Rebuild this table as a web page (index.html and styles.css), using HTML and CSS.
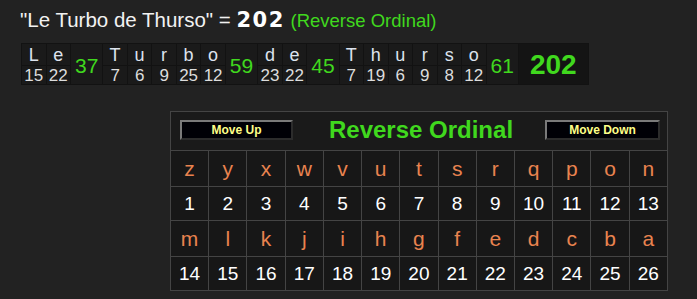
FILE: index.html
```html
<!DOCTYPE html>
<html lang="en">
<head>
    <meta charset="UTF-8">
    <meta name="viewport" content="width=device-width, initial-scale=1.0">
    <title>Le Turbo de Thurso - Reverse Ordinal</title>
    <link rel="stylesheet" href="styles.css">
</head>
<body>
    <div class="page">
        <div class="phrase">"Le Turbo de Thurso" = <b class="phrase-total">202</b> <span class="cipher-tag">(Reverse Ordinal)</span></div>

        <table class="breakdown">
            <tr>
                <td class="ch">L</td><td class="ch">e</td>
                <td class="word-sum" rowspan="2">37</td>
                <td class="ch">T</td><td class="ch">u</td><td class="ch">r</td><td class="ch">b</td><td class="ch">o</td>
                <td class="word-sum" rowspan="2">59</td>
                <td class="ch">d</td><td class="ch">e</td>
                <td class="word-sum" rowspan="2">45</td>
                <td class="ch">T</td><td class="ch">h</td><td class="ch">u</td><td class="ch">r</td><td class="ch">s</td><td class="ch">o</td>
                <td class="word-sum" rowspan="2">61</td>
                <td class="grand" rowspan="2">202</td>
            </tr>
            <tr class="vals">
                <td>15</td><td>22</td>
                <td>7</td><td>6</td><td>9</td><td>25</td><td>12</td>
                <td>23</td><td>22</td>
                <td>7</td><td>19</td><td>6</td><td>9</td><td>8</td><td>12</td>
            </tr>
        </table>

        <table class="cipher">
            <tr>
                <td class="cipher-head" colspan="13">
                    <div class="head-bar">
                        <button class="move-btn move-up">Move Up</button>
                        <h2 class="cipher-name">Reverse Ordinal</h2>
                        <button class="move-btn move-down">Move Down</button>
                    </div>
                </td>
            </tr>
            <tr class="letters">
                <td>z</td><td>y</td><td>x</td><td>w</td><td>v</td><td>u</td><td>t</td><td>s</td><td>r</td><td>q</td><td>p</td><td>o</td><td>n</td>
            </tr>
            <tr class="numbers">
                <td>1</td><td>2</td><td>3</td><td>4</td><td>5</td><td>6</td><td>7</td><td>8</td><td>9</td><td>10</td><td>11</td><td>12</td><td>13</td>
            </tr>
            <tr class="letters">
                <td>m</td><td>l</td><td>k</td><td>j</td><td>i</td><td>h</td><td>g</td><td>f</td><td>e</td><td>d</td><td>c</td><td>b</td><td>a</td>
            </tr>
            <tr class="numbers">
                <td>14</td><td>15</td><td>16</td><td>17</td><td>18</td><td>19</td><td>20</td><td>21</td><td>22</td><td>23</td><td>24</td><td>25</td><td>26</td>
            </tr>
        </table>
    </div>
</body>
</html>
```

FILE: styles.css
```css
:root {
    --page-bg: #222222;
    --cell-bg: #1a1a1a;
    --grid-bg: #171717;
    --grid-line: #444444;
    --green: #40d81e;
    --orange: #e9834f;
    --text: #e4e4e4;
}

* {
    margin: 0;
    padding: 0;
    box-sizing: border-box;
    font-family: "Liberation Sans", Arial, sans-serif;
}

body {
    background-color: var(--page-bg);
    color: var(--text);
}

.page {
    padding: 8px 0 0 20px;
}

/* Phrase line */
.phrase {
    font-size: 20.5px;
    line-height: 24px;
    color: #f2f2f2;
}

.phrase-total {
    font-family: "DejaVu Sans", sans-serif;
    font-size: 21px;
    font-weight: 700;
    letter-spacing: 1.5px;
    color: #ffffff;
}

.cipher-tag {
    font-size: 18.5px;
    color: var(--green);
}

/* Word breakdown */
.breakdown {
    margin: 10px 0 0 1px;
    border-collapse: collapse;
    background-color: var(--cell-bg);
}

.breakdown td {
    border: 1px solid #121212;
    text-align: center;
    padding: 0;
    line-height: 1;
}

.breakdown .ch {
    width: 24.5px;
    height: 22px;
    font-size: 18px;
    color: #dde3ee;
}

.breakdown .vals td {
    height: 19px;
    font-size: 17px;
    color: #dddddd;
}

.breakdown .word-sum {
    padding: 2px 4px 0;
    font-size: 21px;
    color: var(--green);
}

.breakdown .grand {
    padding: 2px 11px 0;
    font-size: 28px;
    font-weight: 700;
    color: var(--green);
    background-color: #141414;
}

/* Cipher chart */
.cipher {
    margin: 26px 0 0 150px;
    width: 498px;
    table-layout: fixed;
    border-collapse: collapse;
    background-color: var(--grid-bg);
}

.cipher td {
    border: 1px solid var(--grid-line);
    text-align: center;
    padding: 0;
}

.cipher-head {
    height: 39px;
    background-color: #1a1a1a;
}

.head-bar {
    display: flex;
    align-items: center;
    justify-content: space-between;
    padding: 0 7px 2px 9px;
}

.cipher-name {
    font-size: 24px;
    line-height: 28px;
    font-weight: 700;
    color: var(--green);
    margin-left: 4px;
}

.move-btn {
    height: 20px;
    background-color: #000006;
    border: 2px solid;
    border-color: #7a7a7a #2c2c2c #2c2c2c #7a7a7a;
    color: #ffff88;
    font-size: 12px;
    font-weight: 700;
    cursor: pointer;
}

.move-up {
    width: 113px;
}

.move-down {
    width: 115px;
}

.letters td {
    height: 36px;
    font-size: 21px;
    color: var(--orange);
}

.numbers td {
    height: 34px;
    font-size: 19px;
    color: #ffffff;
}
```
